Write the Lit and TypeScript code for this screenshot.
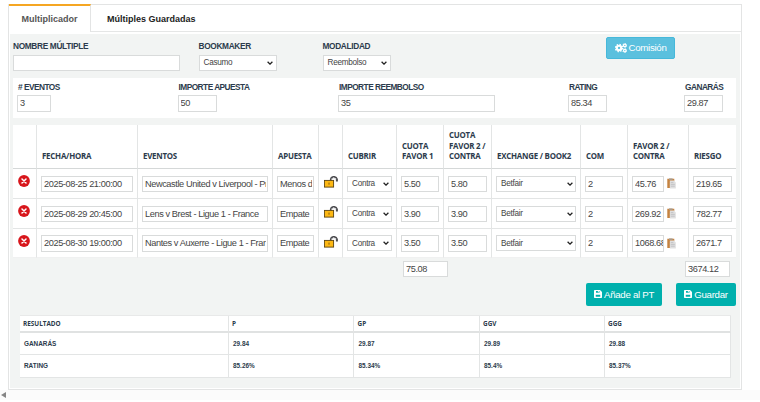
import { LitElement, html, css, svg } from "lit";
import { customElement } from "lit/decorators.js";

const events = [
  { date: "2025-08-25 21:00:00", name: "Newcastle United v Liverpool - Premier League", bet: "Menos de 2.5", odd: "5.50", lay: "5.80", stake: "45.76", risk: "219.65" },
  { date: "2025-08-29 20:45:00", name: "Lens v Brest - Ligue 1 - France", bet: "Empate", odd: "3.90", lay: "3.90", stake: "269.92", risk: "782.77" },
  { date: "2025-08-30 19:00:00", name: "Nantes v Auxerre - Ligue 1 - France", bet: "Empate", odd: "3.50", lay: "3.50", stake: "1068.68", risk: "2671.7" },
];

const results = [
  ["GANARÁS", "29.84", "29.87", "29.89", "29.88"],
  ["RATING", "85.26%", "85.34%", "85.4%", "85.37%"],
];

const removeIcon = html`<svg class="remove" viewBox="0 0 12 12">
  <circle cx="6" cy="6" r="5.9" fill="#d8161c" />
  <path d="M4 4l4 4M8 4l-4 4" stroke="#fff" stroke-width="1.5" stroke-linecap="round" />
</svg>`;

const lockIcon = html`<svg class="lock" viewBox="0 0 14 12">
  <path d="M6.900 4.800V3.200C7.300 .2 12.200 .2 12.900 3.200V5.400" fill="none" stroke="#4c4c50" stroke-width="2" />
  <path d="M7.500 3.600C8 1 11.800 1 12.400 3.800" fill="none" stroke="#d8d8dc" stroke-width="1" stroke-dasharray="1.500 .8" />
  <rect x=".4" y="4.400" width="9.200" height="6.700" fill="#fdb813" stroke="#5b4310" stroke-width=".9" />
  <path d="M5 6.600v2.100" stroke="#8a5c08" stroke-width="1" />
</svg>`;

const clipIcon = html`<svg class="clip" viewBox="0 0 9 11">
  <path d="M.3 .8h7v2.200H3v7H.3z" fill="#c58340" />
  <rect x="2" y=".4" width="3.600" height="1.600" fill="#a89a8c" />
  <path d="M2.800 2.600H7l1.800 1.800v6.200h-6z" fill="#dfdfdf" />
  <path d="M3.800 4.600h2.600M3.800 6.400h4M3.800 8.200h4" stroke="#bcbcc0" stroke-width=".8" />
</svg>`;

const saveIcon = html`<svg class="save" viewBox="0 0 16 16">
  <path fill="#fff" fill-rule="evenodd" d="M1.500 0H12l4 4v10.500a1.500 1.500 0 0 1-1.500 1.500h-13A1.500 1.500 0 0 1 0 14.500v-13A1.500 1.500 0 0 1 1.500 0zM4 2v3.400h7V2zM3.500 9.500v4.200h9V9.500z" />
  <rect x="7.800" y="2" width="1.800" height="2.600" fill="#fff" />
</svg>`;

const gear = (x: number, y: number, r: number, teeth: number) => svg`
  <circle cx=${x} cy=${y} r=${r * 0.54} fill="none" stroke="#fff" stroke-width=${r * 0.52} />
  <circle cx=${x} cy=${y} r=${r * 0.86} fill="none" stroke="#fff" stroke-width=${r * 0.34}
    stroke-dasharray="${(r * 0.86 * Math.PI) / teeth} ${(r * 0.86 * Math.PI) / teeth}" />`;

const gearsIcon = html`<svg class="gears" viewBox="0 0 22 18">
  ${gear(7.4, 9, 7.6, 8)}${gear(18, 4.3, 4.4, 6)}${gear(18, 13.7, 4.4, 6)}
</svg>`;

const pick = (label: string, cls = "") => html`<span class="select ${cls}"
  ><span>${label}</span><svg viewBox="0 0 6 4"><path d="M.6 .7L3 3.100L5.400 .7" fill="none" stroke="#222" stroke-width="1.300" /></svg></span>`;

const box = (value: string, cls = "") => html`<input class=${cls} .value=${value} />`;

@customElement("app-root")
export class AppRoot extends LitElement {
  static styles = css`
    * { box-sizing: border-box; }
    :host {
      display: block;
      height: 402px;
      overflow: hidden;
      background: #fff;
      color: #2c3b4c;
      font-family: "Liberation Sans", Arial, sans-serif;
      padding-top: 4px;
    }
    .frame { width: 734px; height: 386px; margin-left: 8px; border: 1px solid #e3e4e4; display: flex; flex-direction: column; }
    .tabs { display: flex; height: 27.500px; margin-top: -1px; flex: none; }
    .tab { font-size: 9px; font-weight: bold; line-height: 29px; border-bottom: 1px solid #e5e6e6; border-top: 1px solid #e3e4e4; white-space: nowrap; color: #222; padding-left: 16px; flex: 1; }
    .tab.active { flex: none; width: 82px; padding-left: 12.500px; border-top: 2px solid #f5a623; border-bottom: 0; border-right: 1px solid #e3e4e4; color: #555; line-height: 27px; }
    .body { flex: 1; margin: 2px 1px 1px; background: #f2f4f3; padding: 3px 3px 0; min-height: 0; }
    .label { font-size: 8.300px; letter-spacing: -.33px; font-weight: bold; line-height: 10px; white-space: nowrap; display: block; }
    input {
      display: block; width: 100%; height: 16.500px; margin: 0; border: 1px solid #d9dbdb; border-radius: 0; outline: 0;
      padding: 0 1px 0 2px; background: #fff; color: #444; font: 9.200px "Liberation Sans", Arial, sans-serif; letter-spacing: -.4px; min-width: 0;
    }
    .select {
      display: flex; align-items: center; justify-content: space-between; height: 16px; background: #fff; color: #444;
      border: 1px solid #d9dbdb; font-size: 8.200px; letter-spacing: -.28px; padding: 0 2.500px 0 4px;
    }
    .select svg { width: 6px; height: 4px; flex: none; }
    .setup { display: grid; grid-template-columns: 185.500px 124px 283.500px 1fr; height: 41.500px; }
    .setup .label { margin: 4px 0 4px; }
    .name { width: 167px; }
    .book { width: 78px; }
    .mode { width: 68px; }
    .btn {
      display: flex; align-items: center; justify-content: center; height: 22.500px; border-radius: 2px;
      color: #fff; background: #00b0ad; font-size: 9.700px; letter-spacing: -.3px; white-space: nowrap; gap: 2px;
    }
    .btn.info { width: 69px; background: #5bc0de; border: 1px solid #46b8da; }
    .gears { width: 12px; height: 10px; }
    .save { width: 8px; height: 8px; }
    .summary { display: grid; grid-template-columns: 160.500px 160.500px 230px 116px 1fr; height: 39.500px; background: #fff; padding: 4px 0 0 4px; width: 723px; }
    .summary .label { margin-bottom: 3px; padding-left: 1px; letter-spacing: -.52px; }
    .w34 { width: 34px; }
    .w39 { width: 39px; }
    .w157 { width: 157px; }
    .grid {
      display: grid; width: 723px; margin-top: 7.500px; background: #fff;
      grid-template-columns: 24px 101px 135px 46px 24px 54px 47px 48px 89px 47px 61px 47px;
      grid-template-rows: 44px 30px 29.500px 29.500px;
    }
    .cell { border-right: 1px solid #e3e5e5; border-bottom: 1px solid #e3e5e5; padding: 6.500px 4px 0 4px; min-width: 0; }
    .cell.last { border-right: 0; }
    .cell.bottom { border-bottom-color: #f0f1f1; }
    .head { display: flex; align-items: flex-end; padding: 0 0 6.500px 5px; font: bold 7.900px/10.500px "Open Sans", sans-serif; letter-spacing: -.23px; white-space: pre; border-bottom-color: #d5d8d8; }
    .icon { padding: 6px 0 0 5px; }
    .remove { display: block; width: 12px; height: 12px; }
    .lock { display: block; width: 14px; height: 12px; margin-top: 1px; }
    .stake { display: flex; gap: 2.500px; padding-right: 0; }
    .stake input { width: 32px; flex: none; padding-right: 0; }
    .clip { width: 9px; height: 11px; margin-top: 2.500px; }
    .totals { display: flex; justify-content: space-between; width: 327px; margin: 2.500px 0 0 390px; }
    .totals input { width: 45px; }
    .actions { display: flex; justify-content: flex-end; gap: 14px; width: 723px; margin-top: 6px; }
    .w76 { width: 76px; }
    .w60 { width: 60px; }
    .results { display: grid; width: 711px; margin: 9.500px 0 0 6.500px; grid-template-columns: 209px 125.500px 125.500px 125px 1fr; grid-template-rows: 16.500px 22.500px 23px; background: #fff; border-top: 1px solid #e8e9e9; }
    .res { border-right: 1px solid #e3e5e5; border-bottom: 1px solid #e3e5e5; padding-left: 4.500px; font-size: 6.400px; font-weight: bold; line-height: 22.500px; }
    .res.th { font-family: "Open Sans", sans-serif; line-height: 15.500px; padding-left: 3.500px; border-bottom: 2px solid #e0e2e2; }
    .scroll { height: 10px; background: #fbfbfb; display: flex; align-items: center; padding-left: 1px; }
    .scroll svg { width: 5px; height: 6px; }
  `;

  render() {
    const heads = ["", "FECHA/HORA", "EVENTOS", "APUESTA", "", "CUBRIR", "CUOTA\nFAVOR 1", "CUOTA\nFAVOR 2 /\nCONTRA", "EXCHANGE / BOOK2", "COM", "FAVOR 2 /\nCONTRA", "RIESGO"];
    return html`
      <div class="frame">
        <div class="tabs"><div class="tab active">Multiplicador</div><div class="tab">Múltiples Guardadas</div></div>
        <div class="body">
          <div class="setup">
            <div><span class="label">NOMBRE MÚLTIPLE</span>${box("", "name")}</div>
            <div><span class="label">BOOKMAKER</span>${pick("Casumo", "book")}</div>
            <div><span class="label">MODALIDAD</span>${pick("Reembolso", "mode")}</div>
            <div><div class="btn info">${gearsIcon}<span>Comisión</span></div></div>
          </div>
          <div class="summary">
            <div><span class="label"># EVENTOS</span>${box("3", "w34")}</div>
            <div><span class="label">IMPORTE APUESTA</span>${box("50", "w39")}</div>
            <div><span class="label">IMPORTE REEMBOLSO</span>${box("35", "w157")}</div>
            <div><span class="label">RATING</span>${box("85.34", "w39")}</div>
            <div><span class="label">GANARÁS</span>${box("29.87", "w39")}</div>
          </div>
          <div class="grid">
            ${heads.map((h, i) => html`<div class="cell head ${i === 11 ? "last" : ""}">${h}</div>`)}
            ${events.map((e, i) => {
              const b = i === events.length - 1 ? "bottom" : "";
              return html`
                <div class="cell icon ${b}">${removeIcon}</div>
                <div class="cell ${b}">${box(e.date)}</div>
                <div class="cell ${b}">${box(e.name)}</div>
                <div class="cell ${b}">${box(e.bet)}</div>
                <div class="cell icon ${b}">${lockIcon}</div>
                <div class="cell ${b}">${pick("Contra")}</div>
                <div class="cell ${b}">${box(e.odd)}</div>
                <div class="cell ${b}">${box(e.lay)}</div>
                <div class="cell ${b}">${pick("Betfair")}</div>
                <div class="cell ${b}">${box("2")}</div>
                <div class="cell stake ${b}">${box(e.stake)}${clipIcon}</div>
                <div class="cell last ${b}">${box(e.risk)}</div>`;
            })}
          </div>
          <div class="totals">${box("75.08")}${box("3674.12")}</div>
          <div class="actions">
            <div class="btn w76">${saveIcon}<span>Añade al PT</span></div>
            <div class="btn w60">${saveIcon}<span>Guardar</span></div>
          </div>
          <div class="results">
            ${["RESULTADO", "P", "GP", "GGV", "GGG"].map((t) => html`<div class="res th">${t}</div>`)}
            ${results.map((r) => r.map((t) => html`<div class="res">${t}</div>`))}
          </div>
        </div>
      </div>
      <div class="scroll"><svg viewBox="0 0 5 6"><path d="M5 0v6L0 3z" fill="#858585" /></svg></div>
    `;
  }
}
